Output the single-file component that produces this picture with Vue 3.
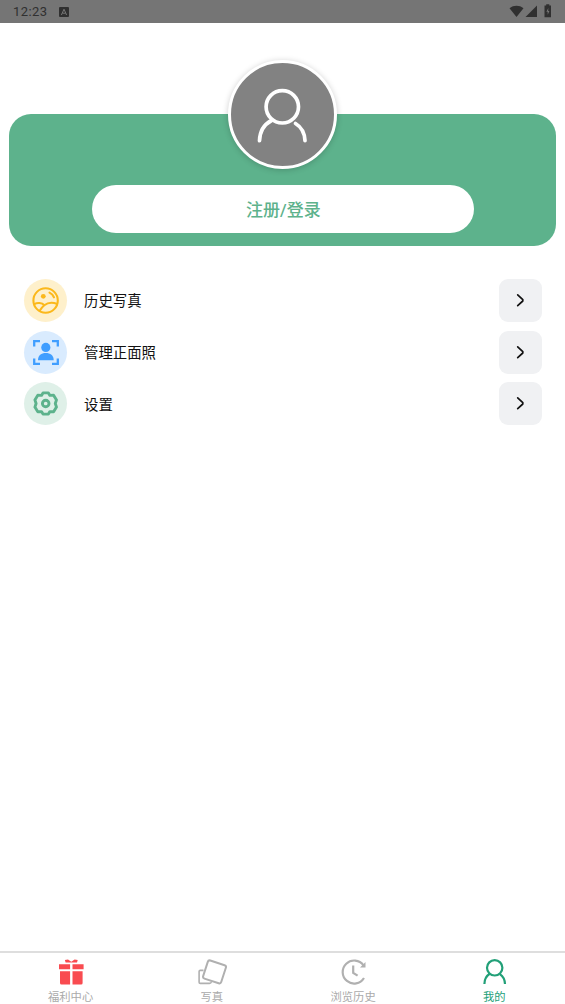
<script setup>
const rows = [
  { icon: 'photo', label: '历史写真' },
  { icon: 'face', label: '管理正面照' },
  { icon: 'gear', label: '设置' },
]
const tabs = [
  { icon: 'gift', label: '福利中心' },
  { icon: 'cards', label: '写真' },
  { icon: 'clock', label: '浏览历史' },
  { icon: 'user', label: '我的', active: true },
]
</script>

<template>
  <div class="screen">
    <header class="status">
      <span class="time">12:23</span>
      <svg class="app-badge" width="10" height="10" viewBox="0 0 10 10">
        <rect width="10" height="10" rx="1" fill="#303030" />
        <path d="M2.4 8 5 2.2 7.6 8M3.5 6.2h3" fill="none" stroke="#777" stroke-width="1" />
      </svg>
      <svg class="signals" width="44" height="14" viewBox="0 0 44 14">
        <path d="M0.5 4.2C4.5 .9 10.500 .9 14.500 4.200L7.500 13Z" fill="#303030" />
        <path d="M16.500 13H28V1.500Z" fill="#303030" />
        <path d="M35.500 1.500h1.700V.3h3.100v1.200H42V13.200H35.500Z" fill="#303030" />
        <path d="M39.300 4 37.400 7.700h1.300v3L40.400 7h-1.200Z" fill="#777" />
      </svg>
    </header>

    <main>
      <section class="card">
        <div class="avatar">
          <svg width="103" height="103" viewBox="1 1 103 103" fill="none" stroke="#fff" stroke-width="3.700" stroke-linecap="round">
            <circle cx="52.300" cy="44.800" r="16.200" />
            <path d="M41.500 58.500C34 62.500 29.800 69.500 29.500 78.700" />
            <path d="M65.500 61.500C71.300 65 74.700 71.500 75 78.700" />
          </svg>
        </div>
        <button class="login">注册/登录</button>
      </section>

      <nav class="menu">
        <div v-for="row in rows" :key="row.icon" class="row">
          <span class="disc" :class="row.icon">
            <svg v-if="row.icon === 'photo'" width="43" height="43" viewBox="0 0 43 43" fill="none" stroke="#fbb81b" stroke-width="2.100">
              <circle cx="21.600" cy="21.500" r="12.200" />
              <circle cx="19.300" cy="17.300" r="2.400" fill="#fbb81b" stroke="none" />
              <path d="M25.500 13.600C28 14.800 29.300 16.300 30 18.300" stroke-linecap="round" />
              <path d="M9.900 25.300C13.500 23.300 18 23.600 20.300 26.300C18.500 27.800 17 29.500 15.500 32M20.300 26.300C24 23.300 29 23.200 33.200 25" />
            </svg>
            <svg v-else-if="row.icon === 'face'" width="43" height="43" viewBox="0 0 43 43">
              <path d="M10.200 15.500V10.200h5.800M28 10.200h5.800v5.300M10.200 27.500v5.300h5.800M28 32.800h5.800v-5.300" fill="none" stroke="#409eff" stroke-width="2.300" />
              <circle cx="21.800" cy="16.400" r="4.600" fill="#409eff" />
              <path d="M14 29.300C14 24.600 17.300 22.100 21.800 22.100S29.700 24.600 29.700 29.300Z" fill="#409eff" />
            </svg>
            <svg v-else width="43" height="43" viewBox="0 0 43 43" fill="none" stroke="#5db28c" stroke-width="2.900" stroke-linejoin="round">
              <path d="M19 10.900h5.400L25.900 13.400 29.600 13.300 32.500 17.900 31.300 21.500 32.500 25.100 29.600 29.700 25.900 29.600 24.400 32.100H19L17.500 29.600 13.800 29.700 10.900 25.100 12.100 21.500 10.900 17.900 13.800 13.300 17.500 13.400Z" />
              <circle cx="21.700" cy="21.500" r="3.300" />
            </svg>
          </span>
          <span class="label">{{ row.label }}</span>
          <span class="go">
            <svg width="43" height="43" viewBox="0 0 43 43" fill="none" stroke="#111" stroke-width="1.700" stroke-linecap="round" stroke-linejoin="round">
              <path d="M18.700 15.900 23.800 20.600V22L18.700 26.700" />
            </svg>
          </span>
        </div>
      </nav>
    </main>

    <footer class="tabs">
      <div v-for="tab in tabs" :key="tab.icon" class="tab" :class="{ active: tab.active }">
        <svg v-if="tab.icon === 'gift'" width="30" height="28" viewBox="0 0 30 28" fill="#f94b50">
          <path d="M8.900 1.900 12 1.500 15.300 3.700 18.600 1.500 21.700 1.900 21 4.600H9.600Z" />
          <path d="M3 6.200h11.100v5H3ZM16.500 6.200h11.100v5H16.500ZM4 13.200h10.100v13.300H5.500Q4 26.500 4 25ZM16.500 13.200h10.100V25q0 1.500-1.500 1.500H16.500Z" />
        </svg>
        <svg v-else-if="tab.icon === 'cards'" width="30" height="28" viewBox="0 0 30 28" fill="none" stroke="#b0b0b0" stroke-width="2" stroke-linejoin="round">
          <path d="M6.500 12.400H3.300q-1.200 0-1.200 1.200v10.600q0 1.200 1.200 1.200h9.200q1.500 0 2-1.800" stroke-width="1.600" />
          <rect x="8" y="4.400" width="19" height="19" rx="2" transform="rotate(18 17.500 13.900)" />
        </svg>
        <svg v-else-if="tab.icon === 'clock'" width="30" height="28" viewBox="0 0 30 28" fill="none" stroke="#b0b0b0" stroke-width="2.200">
          <path d="M25.500 7.300A11.500 11.500 0 1 0 26 20M15.200 7.500v7.300l4.400 2.900" />
          <path d="M27.500 4v5.500h-5.500Z" fill="#b0b0b0" stroke="none" />
        </svg>
        <svg v-else width="30" height="28" viewBox="0 0 30 28" fill="none" stroke="#22a078" stroke-width="2.200">
          <circle cx="15.700" cy="9.800" r="7.700" />
          <path d="M10.700 15.800C6.900 18.200 5.500 21.500 5.400 26M20.900 16.200C24.300 18.500 25.800 21.800 26 26" />
        </svg>
        <span>{{ tab.label }}</span>
      </div>
    </footer>
  </div>
</template>

<style>
body {
  background: #fff;
}
</style>

<style scoped>
.screen {
  display: flex;
  flex-direction: column;
  height: 1004px;
  overflow: hidden;
  background: #fff;
  font-family: Roboto, "Noto Sans CJK SC", sans-serif;
}
.status {
  display: flex;
  align-items: center;
  flex: none;
  box-sizing: border-box;
  height: 22.500px;
  padding: 0 13px;
  background: #757575;
  color: #303030;
}
.time {
  width: 46px;
  font-size: 13px;
  letter-spacing: 0.400px;
}
.app-badge {
  margin-top: 1px;
}
.signals {
  margin-left: auto;
  margin-right: -1px;
}
main {
  flex: 1;
}
.card {
  display: flex;
  flex-direction: column;
  align-items: center;
  box-sizing: border-box;
  height: 132px;
  margin: 91.500px 9.500px 0 9.400px;
  border-radius: 22px;
  background: #5db28c;
}
.avatar {
  flex: none;
  width: 103px;
  height: 103px;
  margin-top: -54.500px;
  border: 3px solid #fff;
  border-radius: 50%;
  background: #828282;
  box-shadow: 0 1px 6px rgba(0, 0, 0, 0.200);
}
.avatar svg {
  display: block;
}
.login {
  flex: none;
  width: 382px;
  height: 48px;
  margin: 16.500px 0 0 1px;
  padding: 0 0 2px 1px;
  border: 0;
  border-radius: 24px;
  background: #fff;
  color: #5db28c;
  font: 500 17px Roboto, "Noto Sans CJK SC", sans-serif;
}
.menu {
  display: flex;
  flex-direction: column;
  gap: 8.800px;
  padding: 32.900px 23px 0 24px;
}
.row {
  display: flex;
  align-items: center;
  height: 43px;
}
.row svg {
  display: block;
}
.disc {
  width: 43px;
  height: 43px;
  border-radius: 50%;
}
.disc.photo {
  background: #fef0cb;
}
.disc.face {
  background: #d9ebfe;
}
.disc.gear {
  background: #dff0e8;
}
.label {
  margin-left: 17px;
  padding-bottom: 1px;
  color: #111;
  font-size: 14.400px;
}
.go {
  margin-left: auto;
  width: 43px;
  height: 43px;
  border-radius: 9px;
  background: #f0f1f3;
}
.tabs {
  display: grid;
  grid-template-columns: repeat(4, 1fr);
  flex: none;
  box-sizing: border-box;
  height: 53.500px;
  border-top: 2px solid #dedede;
}
.tab {
  display: flex;
  flex-direction: column;
  align-items: center;
  padding-top: 5.500px;
  color: #aaa;
  font-size: 11.300px;
  line-height: 18px;
}
.tab svg {
  flex: none;
}
.tab span {
  margin-top: 3px;
}
.tab.active {
  color: #22a078;
}
</style>
